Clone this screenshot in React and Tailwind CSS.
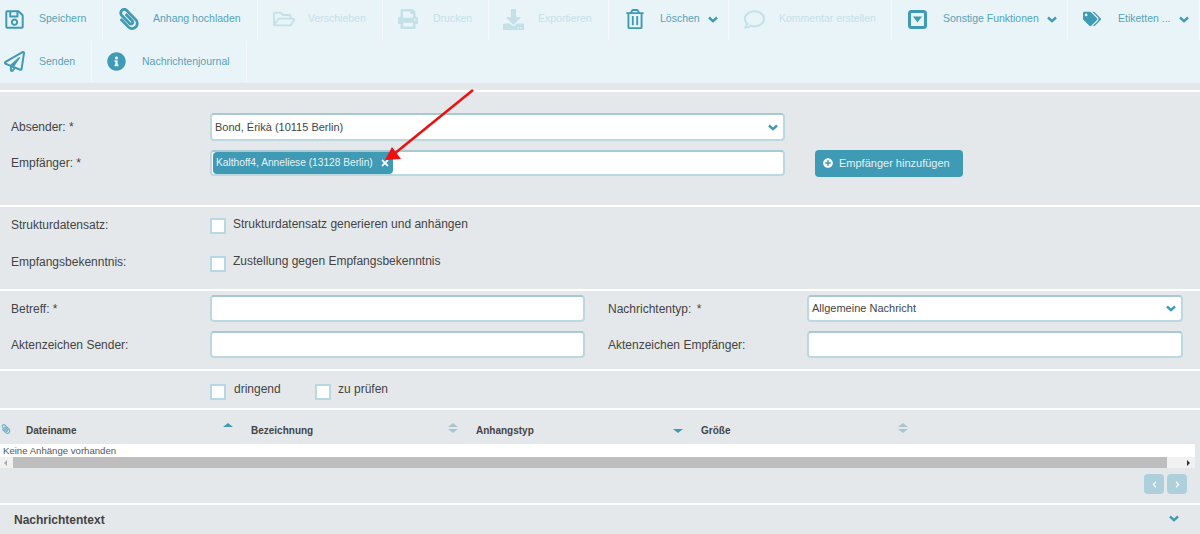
import React from 'react';
import {
  FaRegSave,
  FaPaperclip,
  FaRegFolderOpen,
  FaPrint,
  FaDownload,
  FaRegTrashAlt,
  FaRegComment,
  FaTags,
  FaRegPaperPlane,
  FaInfoCircle,
  FaChevronLeft,
  FaChevronRight,
  FaTimes,
  FaPlusCircle,
} from 'react-icons/fa';

function Chevron({ className = '' }) {
  return (
    <svg className={className} width="10" height="7" viewBox="0 0 10 7" fill="none">
      <path d="M1 1.5 L5 5.2 L9 1.5" stroke="currentColor" strokeWidth="2.4" />
    </svg>
  );
}

// heavy square with a caret, the FA one is too thin
function CaretSquare({ className = '' }) {
  return (
    <svg className={className} width="19" height="19" viewBox="0 0 19 19">
      <rect x="1.5" y="1.5" width="16" height="16" rx="2" fill="none" stroke="currentColor" strokeWidth="3" />
      <polygon points="5,6.5 14,6.5 9.5,12.5" fill="currentColor" />
    </svg>
  );
}

function ToolButton({ icon: Icon, label, width, dim, menu, first, iconClass = 'text-[20px]', left = 'pl-[15px]' }) {
  return (
    <div
      className={`flex h-[41px] items-center border-r border-[#f3f9fb] ${left} ${width} ${first ? 'pb-[3px]' : ''} ${dim ? 'text-[#c4e1ea]' : 'text-[#3f9ab5]'}`}
    >
      <div className="flex w-[35px] shrink-0 items-center">
        <Icon className={iconClass} />
      </div>
      <span className={`whitespace-nowrap text-[10.5px] ${dim ? '' : 'text-[#56a3ba]'}`}>{label}</span>
      {menu && <Chevron className="ml-2" />}
    </div>
  );
}

function Checkbox() {
  return <span className="block h-4 w-4 shrink-0 border-2 border-[#b8d9e3] bg-white" />;
}

function TextBox({ className = '' }) {
  return <div className={`h-[27px] rounded-sm border-2 border-[#bcd8e0] border-t-[#a8c8d2] bg-white ${className}`} />;
}

function SelectBox({ value, className = '' }) {
  return (
    <div className={`flex items-center justify-between rounded-sm border-2 border-[#bcd8e0] border-t-[#a8c8d2] bg-white pl-[3px] pr-[5px] text-[11px] text-[#444] ${className}`}>
      <span>{value}</span>
      <Chevron className="text-[#3f9ab5]" />
    </div>
  );
}

function SortIcon({ dir }) {
  return (
    <span className="flex w-[10px] -translate-y-[2px] flex-col items-center gap-[2px]">
      <span className={`h-0 w-0 border-x-[5px] border-b-[4px] border-x-transparent ${dir === 'up' ? 'border-b-[#3f9ab5]' : dir === 'down' ? 'border-b-transparent' : 'border-b-[#a9c5d0]'}`} />
      <span className={`h-0 w-0 border-x-[5px] border-t-[4px] border-x-transparent ${dir === 'down' ? 'border-t-[#3f9ab5]' : dir === 'up' ? 'border-t-transparent' : 'border-t-[#a9c5d0]'}`} />
    </span>
  );
}

function HeaderCell({ label, dir }) {
  return (
    <div className="flex w-[225px] items-center justify-between pr-[18px]">
      <span className="text-[10px] font-bold text-[#444]">{label}</span>
      <SortIcon dir={dir} />
    </div>
  );
}

export default function App() {
  return (
    <div className="relative h-[534px] w-[1200px] overflow-hidden bg-[#e4e8eb] font-['Liberation_Sans',Arial,sans-serif] text-[12px] text-[#444]">
      {/* toolbar */}
      <div className="h-[83px] bg-[#e9f4f8]">
        <div className="flex">
          <ToolButton first icon={FaRegSave} label="Speichern" width="w-[103px]" left="pl-[4px]" iconClass="text-[21px]" />
          <ToolButton first icon={FaPaperclip} label="Anhang hochladen" width="w-[155px]" iconClass="-scale-x-100 text-[22px]" />
          <ToolButton first icon={FaRegFolderOpen} label="Verschieben" width="w-[125px]" iconClass="text-[22px]" dim />
          <ToolButton first icon={FaPrint} label="Drucken" width="w-[106px]" dim />
          <ToolButton first icon={FaDownload} label="Exportieren" width="w-[120px]" left="pl-[14px] pr-0" iconClass="mr-[2px] text-[21px]" dim />
          <ToolButton first icon={FaRegTrashAlt} label="Löschen" width="w-[120px]" left="pl-[16px]" menu />
          <ToolButton first icon={FaRegComment} label="Kommentar erstellen" width="w-[163px]" iconClass="text-[21px]" dim />
          <ToolButton first icon={CaretSquare} label="Sonstige Funktionen" width="w-[176px]" left="pl-[16px]" iconClass="" menu />
          <ToolButton first icon={FaTags} label="Etiketten ..." width="w-[132px]" iconClass="text-[18px]" menu />
        </div>
        <div className="flex">
          <ToolButton icon={FaRegPaperPlane} label="Senden" width="w-[92px]" left="pl-[4px]" iconClass="text-[21px]" />
          <ToolButton icon={FaInfoCircle} label="Nachrichtenjournal" width="w-[155px]" iconClass="text-[19px]" />
        </div>
      </div>

      <div className="mt-[7px] border-t-2 border-white" />

      {/* sender / recipient */}
      <section className="h-[115px] border-b-2 border-white pt-[21px]">
        <div className="flex h-[28px] items-center pl-[11px]">
          <span className="w-[199px]">Absender: *</span>
          <SelectBox value="Bond, Érikà (10115 Berlin)" className="h-[28px] w-[575px]" />
        </div>
        <div className="mt-[9px] flex h-[26px] items-center pl-[11px]">
          <span className="w-[199px]">Empfänger: *</span>
          <div className="flex h-[26px] w-[575px] items-center rounded-sm border-2 border-[#bcd8e0] border-t-[#a8c8d2] bg-white pl-[1px]">
            <span className="flex h-[22px] w-[180px] items-center whitespace-nowrap rounded-sm bg-[#3f9ab5] pl-[3px] text-[10.2px] text-[#e6f3f7]">
              Kalthoff4, Anneliese (13128 Berlin)
              <FaTimes className="ml-[7px] text-[10px] text-white" />
            </span>
          </div>
          <button className="ml-[30px] flex h-[27px] w-[148px] items-center gap-[6px] rounded-sm bg-[#3f9ab5] pl-[8px] text-[11px] text-[#e2f2f6]">
            <FaPlusCircle className="text-[10px] text-white" />
            Empfänger hinzufügen
          </button>
        </div>
      </section>

      {/* options */}
      <section className="h-[84px] border-b-2 border-white pt-[9px]">
        <div className="flex h-[20px] items-center pl-[11px]">
          <span className="w-[199px] -translate-y-[1px]">Strukturdatensatz:</span>
          <Checkbox />
          <span className="ml-[7px] -translate-y-[2px]">Strukturdatensatz generieren und anhängen</span>
        </div>
        <div className="mt-[18px] flex h-[20px] items-center pl-[11px]">
          <span className="w-[199px] -translate-y-[2px]">Empfangsbekenntnis:</span>
          <Checkbox />
          <span className="ml-[7px] -translate-y-[3px]">Zustellung gegen Empfangsbekenntnis</span>
        </div>
      </section>

      {/* subject */}
      <section className="h-[80px] border-b-2 border-white pt-[4px]">
        <div className="flex h-[27px] items-center pl-[11px]">
          <span className="w-[199px]">Betreff: *</span>
          <TextBox className="w-[375px]" />
          <span className="ml-[23px] w-[199px]">Nachrichtentyp: <span className="ml-[2px]">*</span></span>
          <SelectBox value="Allgemeine Nachricht" className="h-[27px] w-[376px]" />
        </div>
        <div className="mt-[9px] flex h-[27px] items-center pl-[11px]">
          <span className="w-[199px]">Aktenzeichen Sender:</span>
          <TextBox className="w-[375px]" />
          <span className="ml-[23px] w-[199px]">Aktenzeichen Empfänger:</span>
          <TextBox className="w-[376px]" />
        </div>
      </section>

      {/* flags */}
      <section className="flex h-[39px] items-center border-b-2 border-white pl-[210px] pt-[4px]">
        <Checkbox />
        <span className="ml-[8px] w-[81px] -translate-y-[3px]">dringend</span>
        <Checkbox />
        <span className="ml-[7px] -translate-y-[3px]">zu prüfen</span>
      </section>

      {/* attachments */}
      <section className="h-[95px] border-b-2 border-white">
        <div className="flex h-[34px] items-center pt-[6px]">
          <div className="flex w-[26px] items-center pl-px">
            <FaPaperclip className="-translate-y-[1px] -scale-x-100 text-[10px] text-[#6fb3c8]" />
          </div>
          <HeaderCell label="Dateiname" dir="up" />
          <HeaderCell label="Bezeichnung" />
          <HeaderCell label="Anhangstyp" dir="down" />
          <HeaderCell label="Größe" />
        </div>
        <div className="mr-[5px] flex h-[13px] items-center bg-white pl-[3px] text-[9.6px] leading-none text-[#555]">
          Keine Anhänge vorhanden
        </div>
        <div className="mr-[5px] flex h-[11px] items-center justify-between bg-[#f1f1f1]">
          <span className="ml-[4px] h-0 w-0 border-y-[3px] border-r-[3px] border-y-transparent border-r-[#aaa]" />
          <span className="ml-[6px] h-[11px] flex-1 bg-[#bebebe]" />
          <span className="ml-[20px] mr-[5px] h-0 w-0 border-y-[3px] border-l-[3px] border-y-transparent border-l-[#333]" />
        </div>
        <div className="mr-[13px] mt-[6px] flex justify-end gap-[3px]">
          <span className="flex h-[20px] w-[20px] items-center justify-center rounded-sm bg-[#add0dc] text-white">
            <FaChevronLeft className="text-[7px]" />
          </span>
          <span className="flex h-[20px] w-[20px] items-center justify-center rounded-sm bg-[#add0dc] text-white">
            <FaChevronRight className="text-[7px]" />
          </span>
        </div>
      </section>

      {/* message text */}
      <section className="flex h-[29px] items-center justify-between pl-[14px] pr-[21px]">
        <span className="text-[12px] font-bold text-[#444]">Nachrichtentext</span>
        <Chevron className="-translate-y-[1px] text-[#3f9ab5]" />
      </section>

      {/* red annotation arrow */}
      <svg className="absolute left-[370px] top-[85px]" width="110" height="85" viewBox="0 0 110 85">
        <line x1="103" y1="5" x2="24" y2="69" stroke="#f00f0f" strokeWidth="2.5" />
        <polygon points="15,75 22,62 31,74" fill="#f00f0f" />
      </svg>
    </div>
  );
}
